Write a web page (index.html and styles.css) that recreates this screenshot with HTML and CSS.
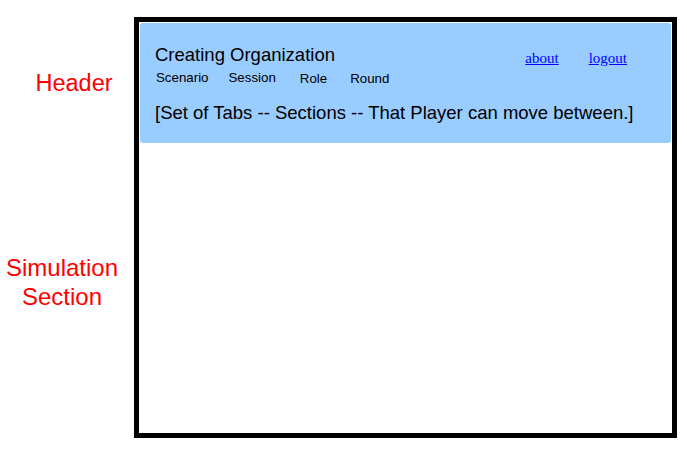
FILE: index.html
```html
<!DOCTYPE html>
<html>
<head>
<meta charset="utf-8">
<link rel="stylesheet" href="styles.css">
</head>
<body>
<div class="page">
  <div class="labels">
    <div class="label label-header">Header</div>
    <div class="label label-sim">Simulation<br>Section</div>
  </div>
  <div class="frame">
    <div class="header">
      <div class="header-top">
        <div class="header-main">
          <div class="title">Creating Organization</div>
          <div class="tabs">
            <span class="tab tab-scenario">Scenario</span>
            <span class="tab tab-session">Session</span>
            <span class="tab tab-role">Role</span>
            <span class="tab tab-round">Round</span>
          </div>
        </div>
        <div class="links">
          <a href="#" class="link">about</a>
          <a href="#" class="link">logout</a>
        </div>
      </div>
      <div class="sections">[Set of Tabs -- Sections -- That Player can move between.]</div>
    </div>
  </div>
</div>
</body>
</html>
```

FILE: styles.css
```css
html, body {
  margin: 0;
  padding: 0;
  background: #ffffff;
}

.page {
  display: flex;
  padding-top: 17px;
  font-family: "Liberation Sans", Arial, sans-serif;
}

.labels {
  width: 124px;
  margin-right: 10px;
  flex: none;
  text-align: center;
  color: #ff0000;
  font-size: 23.5px;
  line-height: 29px;
}

.label-header {
  margin-top: 52px;
  padding-left: 24px;
}

.label-sim {
  margin-top: 155px;
  font-size: 24px;
}

.frame {
  box-sizing: border-box;
  width: 543px;
  height: 421px;
  border: 5px solid #000000;
  padding: 1px;
  background: #ffffff;
}

.header {
  box-sizing: border-box;
  height: 120px;
  background: #99ccff;
  border-radius: 3px;
  padding: 22px 44px 0 15px;
  color: #000000;
}

.header-top {
  display: flex;
  justify-content: space-between;
  align-items: flex-start;
}

.title {
  font-size: 18.5px;
  line-height: 20px;
}

.tabs {
  display: flex;
  margin-top: 5px;
  font-size: 13.3px;
  line-height: 15px;
}

.tab-scenario { margin-left: 1px; }
.tab-session { margin-left: 20px; }
.tab-role { margin-left: 24px; position: relative; top: 1px; }
.tab-round { margin-left: 23px; position: relative; top: 1px; }

.links {
  display: flex;
  gap: 30px;
  margin-top: 5px;
  font-family: "Liberation Serif", "Times New Roman", serif;
  font-size: 15px;
  line-height: 17px;
}

.link {
  color: #0000ff;
  text-decoration: underline;
}

.sections {
  margin-top: 18px;
  font-size: 18.5px;
  line-height: 20px;
  white-space: nowrap;
}
```
